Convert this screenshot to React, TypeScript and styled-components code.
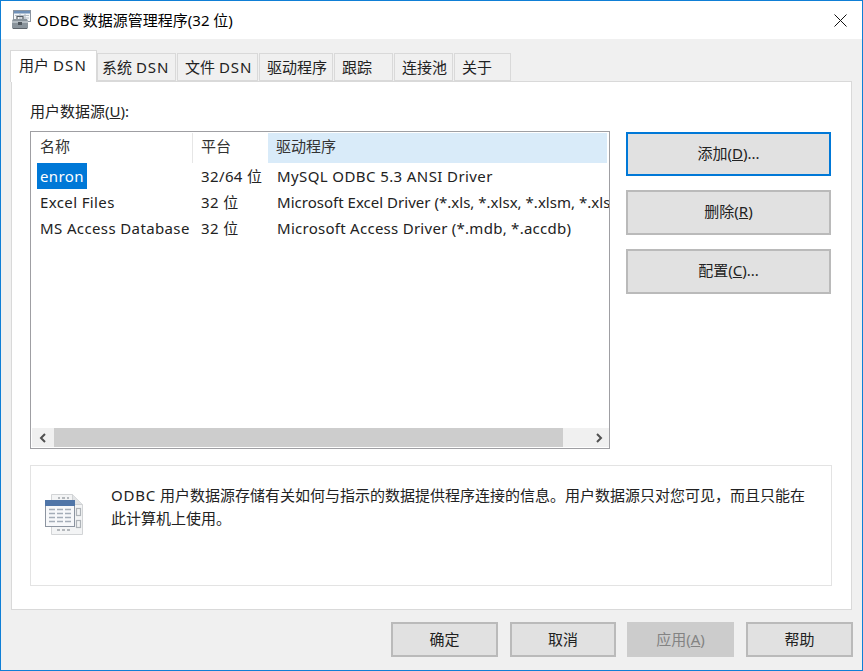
import React from "react";
import styled, { createGlobalStyle } from "styled-components";

const Global = createGlobalStyle`
  html, body { margin: 0; padding: 0; background: #f0f0f0; }
  body { font-family: "Noto Sans", "Noto Sans CJK SC", sans-serif; font-size: 15px; color: #1a1a1a; }
  * { box-sizing: border-box; }
`;

const Frame = styled.div`
  width: 863px; height: 671px; border: 1px solid #0f7fd6; display: flex; flex-direction: column; background: #f0f0f0; overflow: hidden;
`;
const TitleBar = styled.header`
  height: 38px; flex: none; background: #fff; display: flex; align-items: center; padding: 0 15px 0 11px; gap: 6px;
`;
const TitleText = styled.div`
  flex: 1; font-size: 15px; color: #000; line-height: 20px; white-space: nowrap;
`;
const Latin = styled.span<{ $sp: number }>`
  letter-spacing: ${p => p.$sp}px;
`;
const Body = styled.div`
  flex: 1; display: flex; flex-direction: column; padding: 11px 9px 0 9px;
`;
const TabStrip = styled.div`
  display: flex; align-items: flex-end; height: 31px; flex: none; position: relative; z-index: 1; margin-right: 1px;
`;
const Tab = styled.div<{ $active?: boolean; $w: number; $pad?: number }>`
  width: ${p => p.$w}px;
  height: ${p => (p.$active ? 32 : 28)}px;
  margin-bottom: ${p => (p.$active ? -1 : 0)}px;
  margin-right: ${p => (p.$active ? 0 : 1)}px;
  background: ${p => (p.$active ? "#fff" : "#f0f0f0")};
  border: 1px solid #d9d9d9;
  border-bottom: ${p => (p.$active ? "none" : "1px solid #d9d9d9")};
  padding: ${p => (p.$active ? "2px 0 0 8px" : `1px 0 0 ${p.$pad ?? 7}px`)};
  line-height: 24px; white-space: nowrap; color: #222;
`;
const Panel = styled.section`
  height: 529px; flex: none; margin: 0 1px 0 1px; background: #fff; border: 1px solid #d9d9d9; padding: 19px 19px 0 18px; display: flex; flex-direction: column;
`;
const Label = styled.div`
  line-height: 20px; height: 20px; color: #222; margin-bottom: 10px;
`;
const ListRow = styled.div`
  display: flex; height: 318px; flex: none;
`;
const ListBox = styled.div`
  width: 580px; height: 318px; border: 1.5px solid #9f9fa3; background: #fff; display: flex; flex-direction: column; padding: 1px 0 0 1px;
`;
const HeaderRow = styled.div`
  display: flex; height: 30px; flex: none;
`;
const HeaderCell = styled.div<{ $w: number; $hot?: boolean; $divider?: boolean }>`
  width: ${p => p.$w}px; flex: none; padding-left: 8px; line-height: 27px; height: 30px; color: #333;
  background: ${p => (p.$hot ? "#d9ebf9" : "#fff")};
  border-right: ${p => (p.$divider ? "1px solid #e6e6e6" : "none")};
`;
const Rows = styled.div`
  flex: 1; display: flex; flex-direction: column; overflow: hidden; letter-spacing: 0.38px;
`;
const Row = styled.div`
  display: flex; height: 26px; flex: none; line-height: 26px; white-space: nowrap; overflow: hidden;
`;
const NameCell = styled.div`
  width: 161px; flex: none; padding-left: 5px;
`;
const NameText = styled.span<{ $sel?: boolean }>`
  display: inline-block; padding: 0 3px; height: 26px; color: ${p => (p.$sel ? "#fff" : "#222")}; background: ${p => (p.$sel ? "#0078d7" : "transparent")};
`;
const PlatformCell = styled.div`
  width: 76px; flex: none; padding-left: 8px; color: #222;
`;
const DriverCell = styled.div<{ $sp: number }>`
  flex: 1; min-width: 0; padding-left: 8px; color: #222; overflow: hidden; letter-spacing: ${p => p.$sp}px;
`;
const ScrollBar = styled.div`
  height: 19px; flex: none; display: flex; align-items: stretch; background: #f0f0f0; margin-bottom: 1px;
`;
const ArrowBox = styled.div`
  width: 21px; flex: none; display: flex; align-items: center; justify-content: center;
`;
const Thumb = styled.div`
  width: 509px; margin-left: 1px; background: #cdcdcd;
`;
const Track = styled.div`
  flex: 1;
`;
const SideButtons = styled.div`
  margin-left: 16px; display: flex; flex-direction: column; gap: 14px; padding-top: 1px;
`;
const Btn = styled.div<{ $w: number; $h: number; $focus?: boolean; $disabled?: boolean }>`
  width: ${p => p.$w}px; height: ${p => p.$h}px;
  background: ${p => (p.$disabled ? "#cccccc" : "#e1e1e1")};
  border: ${p => (p.$focus ? "2px solid #0078d7" : p.$disabled ? "2px solid #cccccc" : "2px solid #bababa")};
  color: ${p => (p.$disabled ? "#838383" : "#222")};
  display: flex; align-items: center; justify-content: center; line-height: 20px; white-space: nowrap; padding-bottom: 1px;
`;
const SideBtn = styled(Btn)`
  padding-bottom: 3px;
`;
const InfoBox = styled.div`
  margin-top: 16px; width: 802px; height: 121px; border: 1px solid #e3e3e3; display: flex; padding: 18px 0 0 14px;
`;
const InfoIcon = styled.div`
  width: 66px; flex: none; padding-top: 9px;
`;
const InfoText = styled.p`
  margin: 0; width: 700px; line-height: 23px; color: #222; font-size: 15px;
`;
const Footer = styled.footer`
  display: flex; gap: 12px; padding: 12px 0 0 381px;
`;
const TightBtn = styled(Btn)`
  margin-right: -1px;
`;

const AppIcon = () => (
  <svg width="19" height="20" viewBox="0 0 19 20">
    <rect x="1.500" y="0.500" width="17" height="11" fill="#f4f6f8" stroke="#8b95a1" />
    <rect x="2" y="1" width="16" height="2.500" fill="#6f90b8" />
    <path d="M3 5.500h14M7 8h10M8 3.500v7M13 3.500v7" stroke="#b4bcc6" strokeWidth="1" fill="none" />
    <path d="M1 9h14l1 2v7l-1 1H1l-1-1v-7z" fill="#8a949c" />
    <path d="M5 9V6.500h6V9" fill="none" stroke="#555c63" strokeWidth="1.200" />
    <path d="M0 11h16v2H0z" fill="#b4bcc2" />
    <rect x="6" y="12" width="4" height="3" fill="#4e565d" />
    <path d="M1 18.500h14" stroke="#5d646b" />
  </svg>
);
const CloseIcon = () => (
  <svg width="13" height="13" viewBox="0 0 13 13">
    <path d="M0.500 0.500l12 12M12.500 0.500l-12 12" stroke="#111" strokeWidth="1" fill="none" />
  </svg>
);
const Chevron = ({ dir }: { dir: "l" | "r" }) => (
  <svg width="8" height="10" viewBox="0 0 8 10">
    <path d={dir === "l" ? "M6 1L2 5l4 4" : "M2 1l4 4-4 4"} stroke="#505050" strokeWidth="2" fill="none" />
  </svg>
);
const DocTableIcon = () => (
  <svg width="40" height="43" viewBox="0 0 40 43" style={{ display: "block" }}>
    <path d="M6.500 1.500h21l10 10v30h-31z" fill="#f3f4f5" stroke="#d2d4d6" />
    <path d="M27.500 1.500v10h10" fill="#e2e4e6" stroke="#cfd2d4" />
    <path d="M13 5h2M17 5h3M22 5h2M12 37h3M17 37h3M22 37h3" stroke="#b4b8bc" strokeWidth="2" />
    <rect x="31.500" y="15.500" width="4" height="7" fill="none" stroke="#aeb3b8" strokeWidth="1.200" />
    <rect x="31.500" y="27.500" width="4" height="7" fill="none" stroke="#aeb3b8" strokeWidth="1.200" />
    <rect x="0.500" y="7.500" width="29" height="26" fill="#f7f8fa" stroke="#8c94a0" />
    <rect x="0" y="7" width="30" height="6" fill="#4f75a8" />
    <path d="M4 16.500h22M4 20.500h22M4 24.500h22M4 28.500h22" stroke="#a4adb8" strokeWidth="1.400" strokeDasharray="6 2" />
  </svg>
);

const tabs = [
  { t: "系统", w: 79, pad: 4 },
  { t: "文件", w: 81, pad: 7 },
  { t: "驱动程序", w: 74, pad: 7, plain: true },
  { t: "跟踪", w: 59, pad: 7, plain: true },
  { t: "连接池", w: 59, pad: 7, plain: true },
  { t: "关于", w: 57, pad: 7, plain: true },
];
const rows = [
  { n: "enron", p: "32/64 位", d: "MySQL ODBC 5.3 ANSI Driver", sel: true, sp: 0.4 },
  { n: "Excel Files", p: "32 位", d: "Microsoft Excel Driver (*.xls, *.xlsx, *.xlsm, *.xlsb)", sp: 0.02 },
  { n: "MS Access Database", p: "32 位", d: "Microsoft Access Driver (*.mdb, *.accdb)", sp: 0.27 },
];
const footerButtons = [
  { label: <>确定</>, w: 107 },
  { label: <>取消</>, w: 106 },
  { label: <>应用(<u>A</u>)</>, w: 107, disabled: true },
  { label: <>帮助</>, w: 107 },
];

export default function App() {
  return (
    <>
      <Global />
      <Frame>
        <TitleBar>
          <AppIcon />
          <TitleText>ODBC 数据源管理程序(32 位)</TitleText>
          <CloseIcon />
        </TitleBar>
        <Body>
          <TabStrip>
            <Tab $active $w={87}>用户 <Latin $sp={1.2}>DSN</Latin></Tab>
            {tabs.map(t => (
              <Tab key={t.t} $w={t.w} $pad={t.pad}>
                {t.t}{t.plain ? null : <> <Latin $sp={0.9}>DSN</Latin></>}
              </Tab>
            ))}
          </TabStrip>
          <Panel>
            <Label>用户数据源(<u>U</u>):</Label>
            <ListRow>
              <ListBox>
                <HeaderRow>
                  <HeaderCell $w={161} $divider>名称</HeaderCell>
                  <HeaderCell $w={75}>平台</HeaderCell>
                  <HeaderCell $w={339} $hot>驱动程序</HeaderCell>
                </HeaderRow>
                <Rows>
                  {rows.map(r => (
                    <Row key={r.n}>
                      <NameCell><NameText $sel={r.sel}>{r.n}</NameText></NameCell>
                      <PlatformCell>{r.p}</PlatformCell>
                      <DriverCell $sp={r.sp}>{r.d}</DriverCell>
                    </Row>
                  ))}
                </Rows>
                <ScrollBar>
                  <ArrowBox><Chevron dir="l" /></ArrowBox>
                  <Thumb />
                  <Track />
                  <ArrowBox><Chevron dir="r" /></ArrowBox>
                </ScrollBar>
              </ListBox>
              <SideButtons>
                <SideBtn $w={205} $h={44} $focus>添加(<u>D</u>)...</SideBtn>
                <SideBtn $w={205} $h={45}>删除(<u>R</u>)</SideBtn>
                <SideBtn $w={205} $h={45}>配置(<u>C</u>)...</SideBtn>
              </SideButtons>
            </ListRow>
            <InfoBox>
              <InfoIcon><DocTableIcon /></InfoIcon>
              <InfoText><Latin $sp={0.8}>ODBC</Latin> 用户数据源存储有关如何与指示的数据提供程序连接的信息。用户数据源只对您可见，而且只能在此计算机上使用。</InfoText>
            </InfoBox>
          </Panel>
          <Footer>
            {footerButtons.map((b, i) =>
              i === 1 ? (
                <TightBtn key={i} $w={b.w} $h={35}>{b.label}</TightBtn>
              ) : (
                <Btn key={i} $w={b.w} $h={35} $disabled={b.disabled}>{b.label}</Btn>
              )
            )}
          </Footer>
        </Body>
      </Frame>
    </>
  );
}
